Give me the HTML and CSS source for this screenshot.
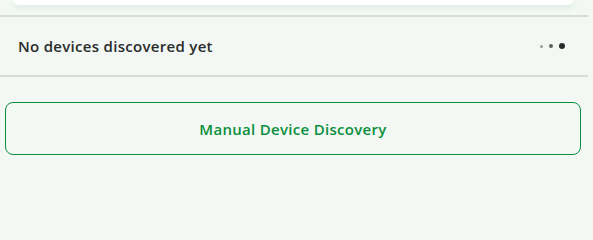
FILE: index.html
```html
<!DOCTYPE html>
<html>
<head>
<meta charset="utf-8">
<link rel="stylesheet" href="styles.css">
</head>
<body>
<div class="page">
  <div class="card-wrap"><div class="card"></div></div>
  <div class="device-row">
    <span class="device-label">No devices discovered yet</span>
    <span class="dots"><i class="d1"></i><i class="d2"></i><i class="d3"></i></span>
  </div>
  <div class="actions">
    <button class="manual-btn">Manual Device Discovery</button>
  </div>
</div>
</body>
</html>
```
FILE: styles.css
```css
html, body {
  margin: 0;
  padding: 0;
  background: #f3f8f4;
  font-family: "Open Sans", Lato, sans-serif;
}
.page {
  width: 588px;
}
.card-wrap {
  height: 15px;
  padding: 0 15px 0 13px;
  overflow: hidden;
}
.card {
  height: 5px;
  background: #ffffff;
  border-radius: 0 0 12px 12px;
  box-shadow: 0 2px 6px rgba(150, 200, 170, 0.35);
}
.device-row {
  display: flex;
  align-items: center;
  justify-content: space-between;
  height: 58px;
  padding: 0 23px 0 18px;
  border-top: 2px solid #d6ddd8;
  border-bottom: 2px solid #d6ddd8;
}
.device-label {
  font-size: 15px;
  font-weight: 600;
  letter-spacing: 0.3px;
  color: #2a2c2b;
}
.dots {
  display: flex;
  align-items: center;
  gap: 6px;
}
.dots i {
  display: block;
  border-radius: 50%;
}
.d1 { width: 3px; height: 3px; background: #9a9d9b; }
.d2 { width: 4px; height: 4px; background: #5e6260; }
.d3 { width: 6px; height: 6px; background: #2a2c2b; }
.actions {
  padding: 25px 8px 0 5px;
}
.manual-btn {
  display: block;
  width: 576px;
  height: 53px;
  background: transparent;
  border: 1px solid #0b8f3d;
  border-radius: 8px;
  color: #0b8f3d;
  font-family: "Open Sans", Lato, sans-serif;
  font-size: 15px;
  font-weight: 600;
  letter-spacing: 0.3px;
  cursor: pointer;
}
```
